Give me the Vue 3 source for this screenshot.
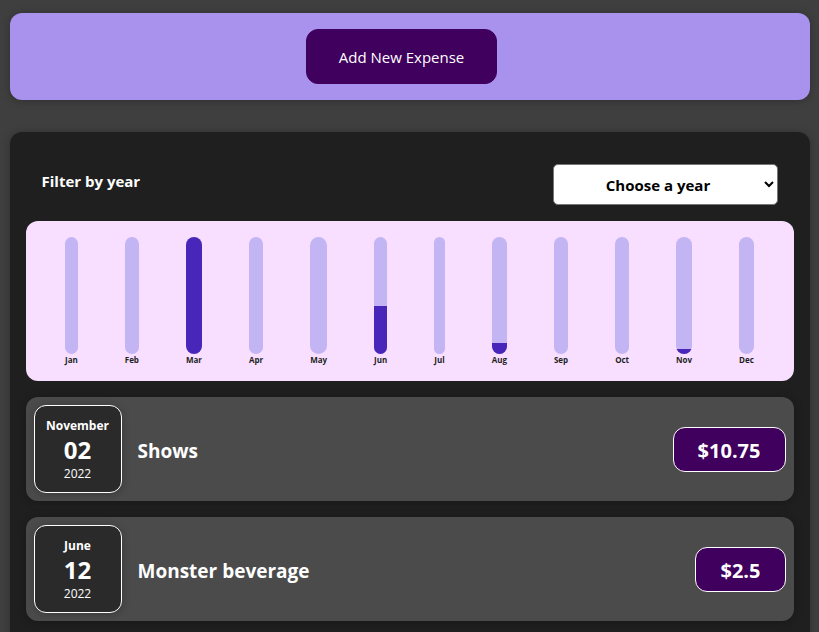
<script setup>
import { computed, ref } from 'vue'

const year = ref('')
const years = [2022, 2021, 2020, 2019]

const months = [
  { label: 'Jan', value: 0 },
  { label: 'Feb', value: 0 },
  { label: 'Mar', value: 117 },
  { label: 'Apr', value: 0 },
  { label: 'May', value: 0 },
  { label: 'Jun', value: 48 },
  { label: 'Jul', value: 0 },
  { label: 'Aug', value: 11 },
  { label: 'Sep', value: 0 },
  { label: 'Oct', value: 0 },
  { label: 'Nov', value: 5 },
  { label: 'Dec', value: 0 },
]

const bars = computed(() => {
  const max = Math.max(...months.map((m) => m.value))
  return months.map((m) => ({ label: m.label, fill: (m.value / max) * 100 + '%' }))
})

const expenses = [
  { id: 1, month: 'November', day: '02', year: 2022, title: 'Shows', amount: 10.75 },
  { id: 2, month: 'June', day: '12', year: 2022, title: 'Monster beverage', amount: 2.5 },
]
</script>

<template>
  <main class="page">
    <section class="new-expense">
      <button type="button" class="add-button">Add New Expense</button>
    </section>

    <section class="expenses">
      <div class="filter">
        <label for="year-filter">Filter by year</label>
        <select id="year-filter" v-model="year">
          <option value="">Choose a year</option>
          <option v-for="y in years" :key="y" :value="y">{{ y }}</option>
        </select>
      </div>

      <div class="chart">
        <div v-for="bar in bars" :key="bar.label" class="chart-bar">
          <div class="track">
            <div class="fill" :style="{ height: bar.fill }"></div>
          </div>
          <div class="month">{{ bar.label }}</div>
        </div>
      </div>

      <ul class="list">
        <li v-for="item in expenses" :key="item.id" class="item">
          <div class="date">
            <div class="date-month">{{ item.month }}</div>
            <div class="date-day">{{ item.day }}</div>
            <div class="date-year">{{ item.year }}</div>
          </div>
          <h2 class="title">{{ item.title }}</h2>
          <div class="price">${{ item.amount }}</div>
        </li>
      </ul>
    </section>
  </main>
</template>

<style>
body {
  margin: 0;
  background: #3f3f3f;
  font-family: 'Segoe UI', 'Open Sans', 'Noto Sans', sans-serif;
}
</style>

<style scoped>
* {
  box-sizing: border-box;
}

.page {
  max-width: 800px;
  margin: 0 auto;
  padding: 13px 0 16px;
  display: flex;
  flex-direction: column;
  gap: 32px;
}

.new-expense {
  display: flex;
  justify-content: center;
  padding: 16px;
  border-radius: 12px;
  background: #a892ee;
  box-shadow: 0 1px 8px rgba(0, 0, 0, 0.25);
}

.add-button {
  margin-right: 16px;
  padding: 17px 32px 15px;
  border: 1px solid #40005d;
  border-radius: 12px;
  background: #40005d;
  color: #fff;
  font-family: inherit;
  font-size: 15px;
  line-height: 21px;
  cursor: pointer;
}

.expenses {
  padding: 16px 16px 32px;
  border-radius: 12px;
  background: #1f1f1f;
  box-shadow: 0 1px 8px rgba(0, 0, 0, 0.25);
}

.filter {
  display: flex;
  align-items: center;
  justify-content: space-between;
  padding: 16px;
  color: #fff;
  font-size: 15px;
  font-weight: 700;
}

.filter label {
  padding-bottom: 8px;
}

.filter select {
  width: 225px;
  height: 41px;
  padding: 8px 18px 8px 16px;
  border: 1px solid #767676;
  border-radius: 5px;
  background: #fff;
  color: #000;
  font: inherit;
  text-align: center;
}

.chart {
  display: flex;
  justify-content: space-around;
  padding: 16px;
  border-radius: 12px;
  background: #f8dfff;
  text-align: center;
}

.chart-bar {
  display: flex;
  flex-direction: column;
}

.track {
  height: 117px;
  display: flex;
  flex-direction: column;
  justify-content: flex-end;
  overflow: hidden;
  border-radius: 12px;
  background: #c3b4f3;
}

.fill {
  background: #4826b9;
}

.month {
  color: #1f1f1f;
  font-size: 8px;
  font-weight: 700;
  line-height: 11px;
}

.list {
  display: flex;
  flex-direction: column;
  gap: 16px;
  margin: 16px 0 0;
  padding: 0;
  list-style: none;
}

.item {
  display: flex;
  align-items: center;
  gap: 16px;
  padding: 8px;
  border-radius: 12px;
  background: #4b4b4b;
  color: #fff;
  box-shadow: 0 1px 8px rgba(0, 0, 0, 0.25);
}

.date {
  display: flex;
  flex-direction: column;
  align-items: center;
  justify-content: center;
  width: 88px;
  height: 88px;
  padding-top: 2px;
  border: 1px solid #fff;
  border-radius: 12px;
  background: #2a2a2a;
  box-shadow: 0 1px 8px rgba(0, 0, 0, 0.25);
}

.date-month {
  font-size: 12px;
  font-weight: 700;
  line-height: 16px;
}

.date-day {
  font-size: 24px;
  font-weight: 700;
  line-height: 32px;
}

.date-year {
  font-size: 12px;
  line-height: 16px;
}

.title {
  flex: 1;
  margin: 0;
  padding-top: 4px;
  font-size: 19px;
  font-weight: 700;
}

.price {
  padding: 9px 24px 7px;
  border: 1px solid #fff;
  border-radius: 12px;
  background: #40005d;
  font-size: 20px;
  font-weight: 700;
  line-height: 27px;
}
</style>
